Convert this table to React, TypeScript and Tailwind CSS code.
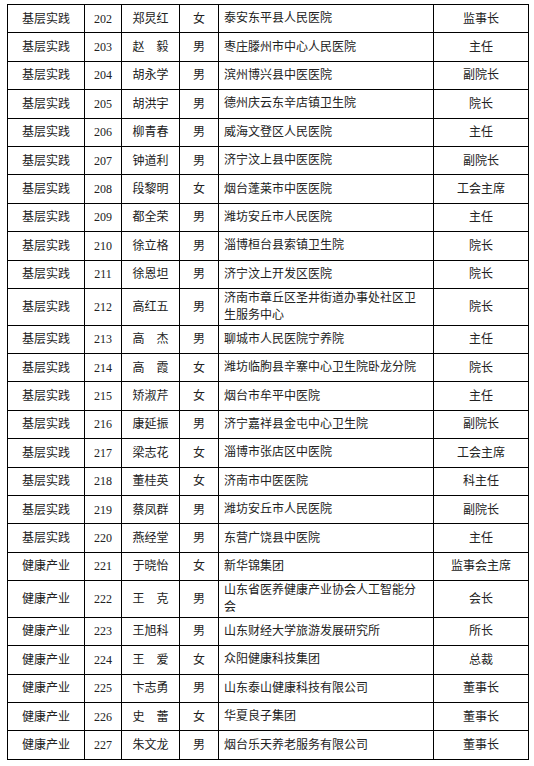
import React from "react";

interface IRow {
  category: string;
  no: number;
  name: string;
  gender: string;
  org: string;
  title: string;
  tall?: boolean;
}

const rows: IRow[] = [
  { category: "基层实践", no: 202, name: "郑炅红", gender: "女", org: "泰安东平县人民医院", title: "监事长" },
  { category: "基层实践", no: 203, name: "赵　毅", gender: "男", org: "枣庄滕州市中心人民医院", title: "主任" },
  { category: "基层实践", no: 204, name: "胡永学", gender: "男", org: "滨州博兴县中医医院", title: "副院长" },
  { category: "基层实践", no: 205, name: "胡洪宇", gender: "男", org: "德州庆云东辛店镇卫生院", title: "院长" },
  { category: "基层实践", no: 206, name: "柳青春", gender: "男", org: "威海文登区人民医院", title: "主任" },
  { category: "基层实践", no: 207, name: "钟道利", gender: "男", org: "济宁汶上县中医医院", title: "副院长" },
  { category: "基层实践", no: 208, name: "段黎明", gender: "女", org: "烟台蓬莱市中医医院", title: "工会主席" },
  { category: "基层实践", no: 209, name: "都全荣", gender: "男", org: "潍坊安丘市人民医院", title: "主任" },
  { category: "基层实践", no: 210, name: "徐立格", gender: "男", org: "淄博桓台县索镇卫生院", title: "院长" },
  { category: "基层实践", no: 211, name: "徐恩坦", gender: "男", org: "济宁汶上开发区医院", title: "院长" },
  { category: "基层实践", no: 212, name: "高红五", gender: "男", org: "济南市章丘区圣井街道办事处社区卫生服务中心", title: "院长", tall: true },
  { category: "基层实践", no: 213, name: "高　杰", gender: "男", org: "聊城市人民医院宁养院", title: "主任" },
  { category: "基层实践", no: 214, name: "高　霞", gender: "女", org: "潍坊临朐县辛寨中心卫生院卧龙分院", title: "院长" },
  { category: "基层实践", no: 215, name: "矫淑芹", gender: "女", org: "烟台市牟平中医院", title: "主任" },
  { category: "基层实践", no: 216, name: "康延振", gender: "男", org: "济宁嘉祥县金屯中心卫生院", title: "副院长" },
  { category: "基层实践", no: 217, name: "梁志花", gender: "女", org: "淄博市张店区中医院", title: "工会主席" },
  { category: "基层实践", no: 218, name: "董桂英", gender: "女", org: "济南市中医医院", title: "科主任" },
  { category: "基层实践", no: 219, name: "蔡凤群", gender: "男", org: "潍坊安丘市人民医院", title: "副院长" },
  { category: "基层实践", no: 220, name: "燕经堂", gender: "男", org: "东营广饶县中医院", title: "主任" },
  { category: "健康产业", no: 221, name: "于晓怡", gender: "女", org: "新华锦集团", title: "监事会主席" },
  { category: "健康产业", no: 222, name: "王　克", gender: "男", org: "山东省医养健康产业协会人工智能分会", title: "会长", tall: true },
  { category: "健康产业", no: 223, name: "王旭科", gender: "男", org: "山东财经大学旅游发展研究所", title: "所长" },
  { category: "健康产业", no: 224, name: "王　爱", gender: "女", org: "众阳健康科技集团", title: "总裁" },
  { category: "健康产业", no: 225, name: "卞志勇", gender: "男", org: "山东泰山健康科技有限公司", title: "董事长" },
  { category: "健康产业", no: 226, name: "史　蕾", gender: "女", org: "华夏良子集团", title: "董事长" },
  { category: "健康产业", no: 227, name: "朱文龙", gender: "男", org: "烟台乐天养老服务有限公司", title: "董事长" },
];

const cell = "flex items-center justify-center border-r border-b border-black";

const App = () => {
  return (
    <div className="w-[534px] h-[766px] bg-white pt-[4px] pl-[7px] font-['Liberation_Serif','Noto_Sans_CJK_SC',serif] text-[12px] text-[#222]">
      <div className="w-[522px] border-l border-t border-black">
        {rows.map((row) => (
          <div
            key={row.no}
            className={`grid grid-cols-[77px_37px_58px_39px_215px_95px] ${
              row.tall ? "h-[36.7px]" : "h-[28.4px]"
            }`}
          >
            <div className={cell}>{row.category}</div>
            <div className={cell}>{row.no}</div>
            <div className={cell}>{row.name}</div>
            <div className={cell}>{row.gender}</div>
            <div className="flex items-center border-r border-b border-black pl-[5px] pr-[8px] leading-[17px]">
              {row.org}
            </div>
            <div className={cell}>{row.title}</div>
          </div>
        ))}
      </div>
    </div>
  );
};

export default App;
